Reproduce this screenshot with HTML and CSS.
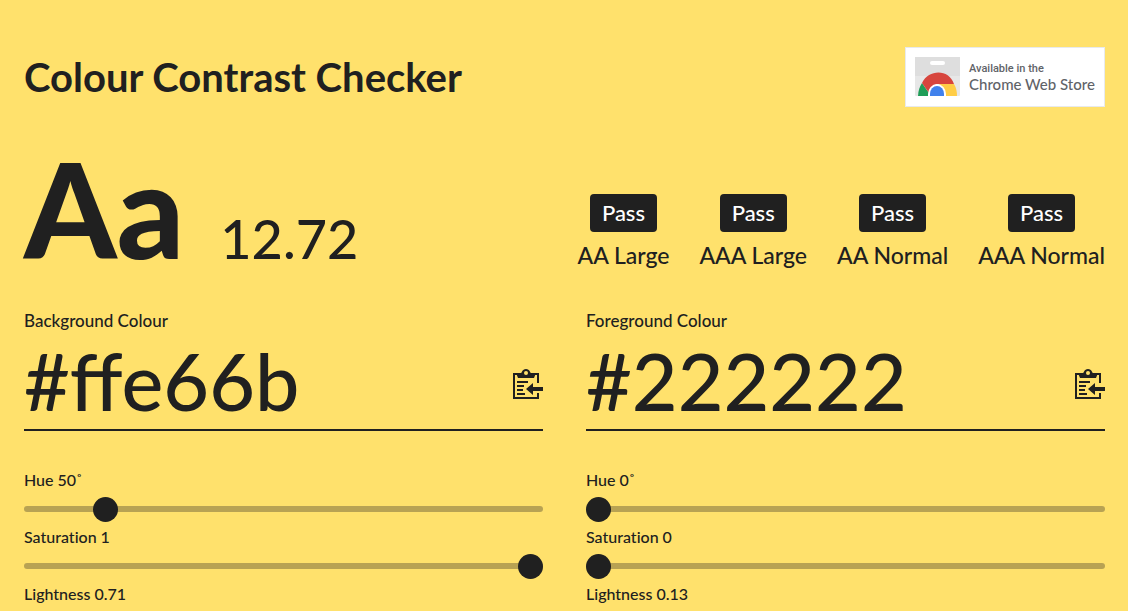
FILE: index.html
```html
<!DOCTYPE html>
<html lang="en">
<head>
<meta charset="utf-8">
<meta name="viewport" content="width=device-width, initial-scale=1">
<title>Colour Contrast Checker</title>
<link rel="stylesheet" href="styles.css">
</head>
<body>
<svg class="sprite" aria-hidden="true">
  <symbol id="paste" viewBox="0 0 30 30">
    <path d="M25 14V5H1v24h24v-5" fill="none" stroke="currentColor" stroke-width="2"/>
    <path d="M3 4h5C9 4 9 0 13 0s4 4 5 4h5l-2 5H5z" fill="currentColor"/>
    <circle cx="13" cy="4" r="2" class="hole"/>
    <path d="M4 13h11M4 17h7M4 21h6M4 25h8" fill="none" stroke="currentColor" stroke-width="2"/>
    <path d="M13 20l7-6v4h10v4H20v4z" fill="currentColor"/>
  </symbol>
</svg>
<main class="page">
  <header class="header">
    <h1 class="title">Colour Contrast Checker</h1>
    <a class="store" href="#">
      <svg class="store-logo" viewBox="0 0 45 40" aria-hidden="true">
        <path d="M0 0h45v38q0 1-1 1H1q-1 0-1-1z" fill="#e7e7e7"/>
        <path d="M0 0h45v19H0z" fill="#dedede"/>
        <rect x="15" y="4" width="15" height="4" rx="2" fill="#fff"/>
        <path d="M3 39a20 23 0 0 1 4-13l9 13z" fill="#1f9d58"/>
        <path d="M7 26C14 12 34 12 39 27H22q-6 1-8 9z" fill="#d7453d"/>
        <path d="M24 27h15q3 5 3 12H29z" fill="#ffcd46"/>
        <path d="M13 39v-2a9 10 0 0 1 18 0v2z" fill="#fff"/>
        <path d="M15 39v-2a7 8 0 0 1 14 0v2z" fill="#4081ec"/>
      </svg>
      <span class="store-text"><span class="store-small">Available in the</span><span class="store-name">Chrome Web Store</span></span>
    </a>
  </header>
  <section class="summary">
    <div class="score"><span class="sample">Aa</span><span class="ratio">12.72</span></div>
    <ul class="results">
      <li class="result"><span class="badge">Pass</span><span>AA Large</span></li>
      <li class="result"><span class="badge">Pass</span><span>AAA Large</span></li>
      <li class="result"><span class="badge">Pass</span><span>AA Normal</span></li>
      <li class="result"><span class="badge">Pass</span><span>AAA Normal</span></li>
    </ul>
  </section>
  <form class="colours">
    <div class="colour">
      <label class="label label-hex" for="bg">Background Colour</label>
      <div class="field">
        <input class="hex" id="bg" type="text" value="#ffe66b" spellcheck="false">
        <button class="paste" type="button" aria-label="Paste background colour"><svg class="icon"><use href="#paste"/></svg></button>
      </div>
      <label class="label" for="bg-h">Hue 50˚</label>
      <input class="slider" id="bg-h" type="range" min="0" max="360" value="50">
      <label class="label" for="bg-s">Saturation 1</label>
      <input class="slider" id="bg-s" type="range" min="0" max="1" step="0.01" value="1">
      <label class="label" for="bg-l">Lightness 0.71</label>
      <input class="slider" id="bg-l" type="range" min="0" max="1" step="0.01" value="0.71">
    </div>
    <div class="colour">
      <label class="label label-hex" for="fg">Foreground Colour</label>
      <div class="field">
        <input class="hex" id="fg" type="text" value="#222222" spellcheck="false">
        <button class="paste" type="button" aria-label="Paste foreground colour"><svg class="icon"><use href="#paste"/></svg></button>
      </div>
      <label class="label" for="fg-h">Hue 0˚</label>
      <input class="slider" id="fg-h" type="range" min="0" max="360" value="0">
      <label class="label" for="fg-s">Saturation 0</label>
      <input class="slider" id="fg-s" type="range" min="0" max="1" step="0.01" value="0">
      <label class="label" for="fg-l">Lightness 0.13</label>
      <input class="slider" id="fg-l" type="range" min="0" max="1" step="0.01" value="0.13">
    </div>
  </form>
</main>
</body>
</html>
```
FILE: styles.css
```css
:root {
  --bg: #ffe16c;
  --fg: #202020;
}
* { box-sizing: border-box; }
html { scrollbar-width: none; }
body {
  margin: 0;
  background: var(--bg);
  color: var(--fg);
  font-family: "Avenir Next", Avenir, Lato, sans-serif;
  font-size: 16px;
  font-weight: 500;
  font-variant-ligatures: none;
}
.sprite { display: none; }
.page { padding: 47px 23px 24px 24px; }
.header {
  display: flex;
  justify-content: space-between;
  align-items: center;
}
.title {
  margin: 0;
  font-size: 40px;
  line-height: 60px;
  font-weight: 700;
}
.store {
  display: flex;
  align-items: center;
  gap: 9px;
  width: 200px;
  height: 60px;
  padding: 0 9px;
  background: #fff;
  border: 1px solid #e8eaed;
  color: #5f6368;
  font-family: Roboto, sans-serif;
  text-decoration: none;
}
.store-logo { flex: none; width: 45px; height: 40px; }
.store-text { display: flex; flex-direction: column; white-space: nowrap; }
.store-small { font-size: 11px; line-height: 14px; }
.store-name { font-family: Lato, sans-serif; font-size: 15px; line-height: 16px; }
.summary {
  display: flex;
  justify-content: space-between;
  align-items: flex-end;
  margin-top: 40px;
  height: 125px;
}
.score { display: flex; align-items: baseline; gap: 36px; }
.sample {
  font-size: 132px;
  line-height: 128px;
  font-weight: 900;
}
.ratio { font-size: 54px; line-height: 64px; }
.results {
  display: flex;
  gap: 30px;
  margin: 0;
  padding: 0 0 2px;
  list-style: none;
  font-size: 23px;
}
.result {
  display: flex;
  flex-direction: column;
  align-items: center;
  gap: 8px;
  line-height: 30px;
}
.badge {
  padding: 4px 12px;
  border-radius: 4px;
  background: var(--fg);
  color: #fff;
  font-size: 22px;
}
.colours {
  display: grid;
  grid-template-columns: repeat(2, minmax(0, 1fr));
  gap: 43px;
  margin-top: 38px;
}
.colour { display: flex; flex-direction: column; }
.label { line-height: 22px; }
.label-hex { font-size: 17px; }
.field {
  display: flex;
  align-items: center;
  height: 99px;
  margin-bottom: 38px;
  border-bottom: 2px solid var(--fg);
}
.hex {
  flex: 1;
  min-width: 0;
  padding: 0;
  border: 0;
  background: none;
  color: inherit;
  font: inherit;
  font-size: 79px;
  line-height: 96px;
  font-variant-ligatures: normal;
  outline: 0;
}
.paste {
  width: 30px;
  height: 30px;
  margin-top: 6px;
  padding: 0;
  border: 0;
  background: none;
  color: inherit;
}
.icon { display: block; width: 30px; height: 30px; }
.hole { fill: var(--bg); }
.slider {
  appearance: none;
  width: 100%;
  height: 25px;
  margin: 5px 0;
  background: none;
}
.slider::-webkit-slider-runnable-track {
  height: 6px;
  border-radius: 3px;
  background: #b8a253;
}
.slider::-webkit-slider-thumb {
  appearance: none;
  width: 25px;
  height: 25px;
  margin-top: -9px;
  border-radius: 50%;
  background: var(--fg);
}
```
